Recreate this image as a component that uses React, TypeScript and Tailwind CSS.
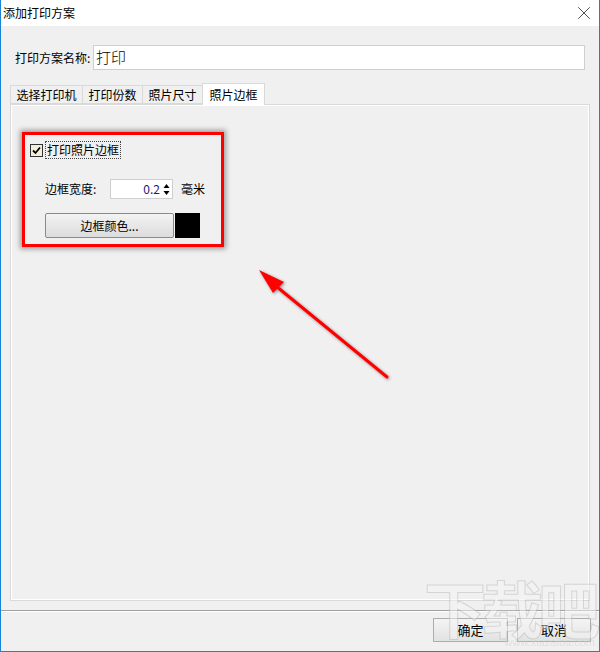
import { X } from "lucide-react";

const tabs = [
  { label: "选择打印机", w: "w-[73px]" },
  { label: "打印份数", w: "w-[61px]" },
  { label: "照片尺寸", w: "w-[61px]" },
];

const App = () => {
  return (
    <div className="relative h-[652px] w-[600px] overflow-hidden border-x border-b border-[#1883d7] bg-[#f0f0f0] font-['Noto_Sans_CJK_SC',sans-serif] text-[12px] text-black">
      {/* title bar */}
      <div className="flex h-[26px] items-center justify-between bg-white pl-[2px] pr-[4px]">
        <span className="text-[12px]">添加打印方案</span>
        <X className="h-[22px] w-[22px]" strokeWidth={0.75} />
      </div>

      {/* name */}
      <div className="mt-[19px] flex items-center pl-[14px] pr-[14px]">
        <span className="w-[78px]">打印方案名称:</span>
        <div className="flex h-[25px] flex-1 items-center border border-[#cfcfcf] bg-white px-[2px] text-[15px] font-light">
          打印
        </div>
      </div>

      {/* tabs */}
      <div className="mt-[13px] flex h-[21px] items-end pl-[9px]">
        {tabs.map((t) => (
          <div
            key={t.label}
            className={`-mr-px flex h-[19px] items-center justify-center border border-[#d9d9d9] bg-[#f0f0f0] text-[12px] ${t.w}`}
          >
            {t.label}
          </div>
        ))}
        <div className="relative z-10 -mb-px flex h-[22px] w-[63px] items-center justify-center border border-b-0 border-[#d9d9d9] bg-white text-[12px]">
          照片边框
        </div>
      </div>
      <div className="mx-[9px] h-[497px] border border-[#d9d9d9]">
        <div className="relative h-full border border-white pl-[18px] pt-[35px]">
          {/* annotation box */}
          <div className="absolute left-[10px] top-[26px] h-[115px] w-[202px] border-[3px] border-[#ff0000] shadow-[0_0_5px_2px_rgba(0,0,0,0.35)]" />

          <div className="flex items-center">
            <div className="flex h-[13px] w-[13px] items-center justify-center border border-[#333] bg-[#f3efd9]">
              <svg width="9" height="9" viewBox="0 0 9 9">
                <path d="M1 4.5 L3.5 7 L8 1.5" fill="none" stroke="#000" strokeWidth="1.8" />
              </svg>
            </div>
            <span className="ml-[2px] border border-dotted border-[#444] px-[1px] leading-[16px]">打印照片边框</span>
          </div>

          <div className="mt-[20px] flex items-center pl-[15px]">
            <span className="w-[65px]">边框宽度:</span>
            <div className="flex h-[20px] w-[63px] items-center justify-end border border-[#cfcfcf] bg-white pr-[2px]">
              <span className="text-[#1d1a7a]">0.2</span>
              <svg className="ml-[3px]" width="7" height="13" viewBox="0 0 7 13">
                <path d="M3.5 1 L6.5 5 L0.5 5 Z" fill="#000" />
                <path d="M0.5 8 L6.5 8 L3.5 12 Z" fill="#000" />
              </svg>
            </div>
            <span className="ml-[8px]">毫米</span>
          </div>

          <div className="mt-[14px] flex items-center pl-[15px]">
            <div className="flex h-[25px] w-[129px] items-center justify-center rounded-[2px] border border-[#8a8a8a] bg-gradient-to-b from-[#f3f3f3] to-[#dcdcdc] text-[12px]">
              边框颜色...
            </div>
            <div className="ml-px h-[25px] w-[25px] bg-black" />
          </div>
        </div>
      </div>

      {/* separator */}
      <div className="mt-[9px] h-[2px] border-t border-[#a0a0a0] bg-white" />

      {/* buttons */}
      <div className="mt-[6px] flex justify-end gap-[9px] pr-[8px]">
        <div className="flex h-[24px] w-[75px] items-center justify-center border border-[#adadad] bg-gradient-to-b from-[#f4f4f4] to-[#e2e2e2] text-[13px]">
          确定
        </div>
        <div className="flex h-[24px] w-[74px] items-center justify-center border border-[#adadad] bg-gradient-to-b from-[#f4f4f4] to-[#e2e2e2] text-[13px]">
          取消
        </div>
      </div>

      {/* annotation arrow */}
      <svg className="pointer-events-none absolute left-0 top-0" width="600" height="652" viewBox="0 0 600 652">
        <defs>
          <filter id="sh" x="-20%" y="-20%" width="140%" height="140%">
            <feDropShadow dx="1" dy="1" stdDeviation="1.6" floodColor="#000" floodOpacity="0.45" />
          </filter>
        </defs>
        <g filter="url(#sh)">
          <line x1="386" y1="377" x2="270" y2="282" stroke="#ff0000" strokeWidth="3" strokeLinecap="round" />
          <path d="M258 270 L283 282 L272 293 Z" fill="#ff0000" />
        </g>
      </svg>

      {/* watermark */}
      <div className="pointer-events-none absolute bottom-[3px] right-[4px] flex flex-col items-end opacity-50">
        <span className="text-[62px] font-bold leading-[60px] tracking-[-5px] text-[#f4f4f4] [-webkit-text-stroke:1px_#b9b9b9]">
          下载吧
        </span>
        <span className="font-['Liberation_Sans',sans-serif] text-[11px] leading-[11px] text-[#cfcfcf]">www.xiazaiba.com</span>
      </div>
    </div>
  );
};

export default App;
